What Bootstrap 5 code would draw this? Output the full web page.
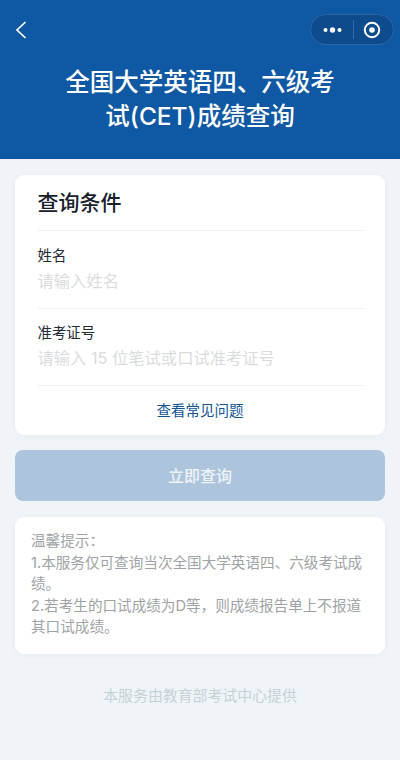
<!DOCTYPE html>
<html lang="zh-CN">
<head>
<meta charset="utf-8">
<meta name="viewport" content="width=device-width, initial-scale=1">
<link href="https://cdn.jsdelivr.net/npm/bootstrap@5.3.0/dist/css/bootstrap.min.css" rel="stylesheet">
<style>
html,body{height:100%;}
body{background:#f0f4f8;font-family:Inter,"Noto Sans CJK SC",sans-serif;width:400px;height:760px;overflow:hidden;}
.hero{background:#0f58a3;height:159px;color:#fff;position:relative;padding-top:14px;}
.topbar{height:31px;padding:0 6px 0 15px;}
.capsule{width:84px;height:31px;border-radius:16px;background:#0d4b8c;border:1px solid #2a66a8;}
.capsule-sep{width:1px;height:19px;background:#2f6aa9;}
.hero-title{font-size:24.5px;line-height:34px;font-weight:500;margin:0;padding:20px 60px 0;text-align:center;}
.panel{background:#fff;border:0;border-radius:9px;box-shadow:0 1px 6px rgba(20,50,90,.04);}
.wrap{padding:16px 15px 0;}
.panel-head{margin:0 21px 0 22.5px;height:56px;border-bottom:1px solid #f1f1f2;font-size:21px;font-weight:500;color:#17202b;line-height:55px;}
.field{margin:0 21px 0 22.5px;height:77.5px;border-bottom:1px solid #f1f1f2;padding-top:13.5px;}
.field-label{font-size:14.4px;line-height:22px;color:#222a33;margin:0;}
.field-hint{font-size:16.3px;line-height:24px;margin-top:2px;color:#dadbdd;white-space:nowrap;}
.faq{height:49px;line-height:49px;font-size:14.5px;color:#0f5596;text-align:center;display:block;text-decoration:none;}
.query-btn{height:51px;width:100%;border:0;border-radius:8px;background:#adc5dc;color:#eef3f8;font-size:16px;font-weight:500;margin-top:15px;display:block;}
.tips{margin-top:16px;padding:14px 16px 15px;font-size:14.6px;line-height:21.5px;color:#a0a3a6;height:137px;}
.foot{margin-top:31px;text-align:center;font-size:14.9px;line-height:22px;color:#c5d2d7;}
</style>
</head>
<body>
<header class="hero">
  <div class="topbar d-flex justify-content-between align-items-center">
    <svg width="12" height="18" viewBox="0 0 12 18" fill="none" stroke="#fff" stroke-width="1.7" aria-label="返回"><path d="M10.5 1 L2 9 L10.5 17"/></svg>
    <div class="capsule d-flex align-items-center justify-content-between px-2">
      <svg width="20" height="8" viewBox="0 0 20 8" class="ms-1" fill="#fff"><circle cx="2.5" cy="4" r="2"/><circle cx="9.5" cy="4" r="2.7"/><circle cx="16.5" cy="4" r="2"/></svg>
      <span class="capsule-sep"></span>
      <svg width="18" height="18" viewBox="0 0 18 18" class="me-1"><circle cx="9" cy="9" r="7.2" fill="none" stroke="#fff" stroke-width="2"/><circle cx="9" cy="9" r="2.8" fill="#fff"/></svg>
    </div>
  </div>
  <h1 class="hero-title">全国大学英语四、六级考试(CET)成绩查询</h1>
</header>
<main class="wrap">
  <section class="card panel">
    <div class="panel-head">查询条件</div>
    <div class="field">
      <p class="field-label">姓名</p>
      <div class="field-hint">请输入姓名</div>
    </div>
    <div class="field">
      <p class="field-label">准考证号</p>
      <div class="field-hint">请输入 15 位笔试或口试准考证号</div>
    </div>
    <a class="faq" href="#">查看常见问题</a>
  </section>
  <button type="button" class="btn query-btn">立即查询</button>
  <section class="card panel tips">
    温馨提示：<br>1.本服务仅可查询当次全国大学英语四、六级考试成绩。<br>2.若考生的口试成绩为D等，则成绩报告单上不报道其口试成绩。
  </section>
  <div class="foot">本服务由教育部考试中心提供</div>
</main>
<script src="https://cdn.jsdelivr.net/npm/bootstrap@5.3.0/dist/js/bootstrap.bundle.min.js"></script>
</body>
</html>
